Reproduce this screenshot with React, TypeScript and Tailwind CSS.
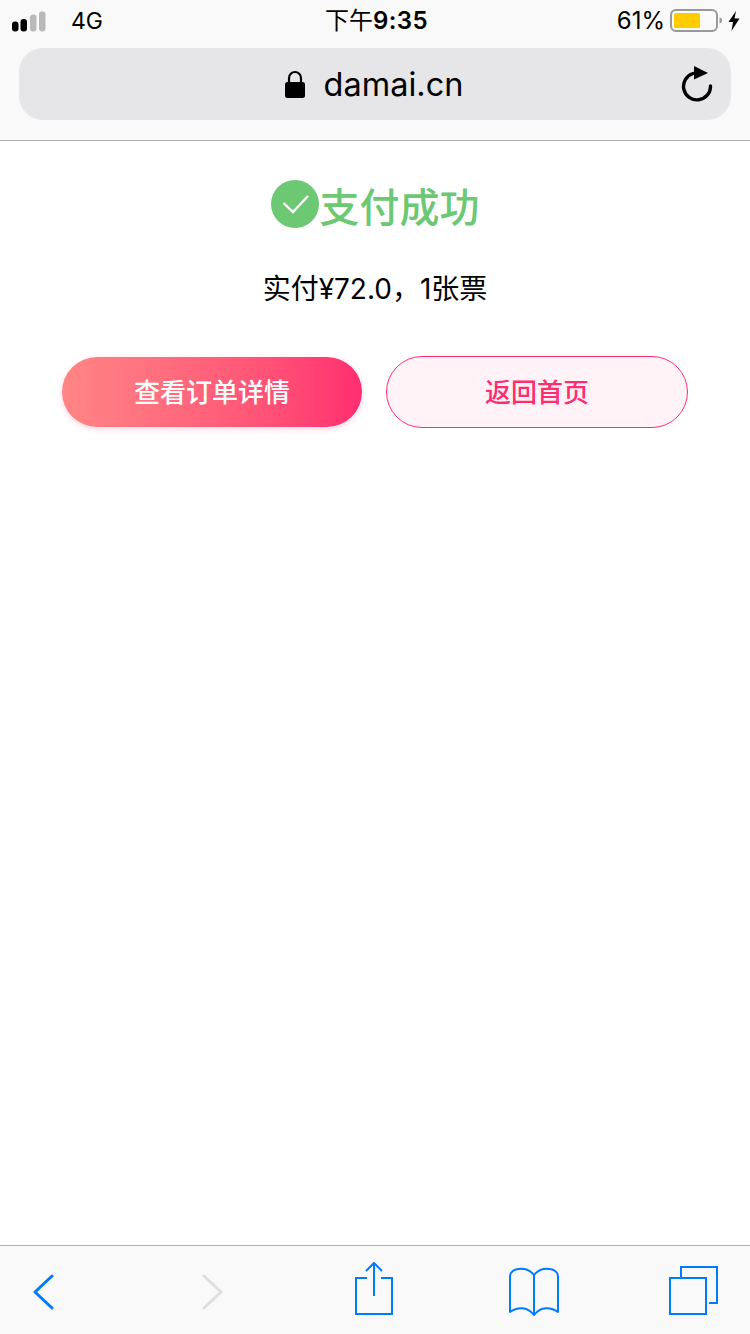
const fontStack = { fontFamily: '"Inter", "Noto Sans CJK SC", sans-serif' };

const SignalIcon = () => (
  <svg width="34" height="21" viewBox="0 0 34 21">
    <rect x="0" y="10.5" width="6.5" height="10" rx="3" fill="#000" />
    <rect x="8.5" y="8" width="6.5" height="12.5" rx="3" fill="#000" />
    <rect x="18" y="3.5" width="6.5" height="17" rx="3" fill="#b9b9b9" />
    <rect x="27" y="0.5" width="6.5" height="20" rx="3" fill="#b9b9b9" />
  </svg>
);

const BatteryIcon = () => (
  <svg width="53" height="24" viewBox="0 0 53 24">
    <rect x="1" y="1" width="46" height="21" rx="5" fill="none" stroke="#999" strokeWidth="2" />
    <rect x="4" y="4" width="26" height="15" rx="1.5" fill="#fc0" />
    <path d="M49.5 8.5 C51.5 9 52 10 52 11.5 C52 13 51.5 14 49.5 14.5Z" fill="#999" />
  </svg>
);

const BoltIcon = () => (
  <svg width="12" height="20" viewBox="0 0 12 20">
    <path d="M8 0 L0.5 11 L5 11 L3.5 20 L11.5 7.5 L6.5 7.5 Z" fill="#000" />
  </svg>
);

const LockIcon = () => (
  <svg width="20" height="28" viewBox="0 0 20 28">
    <path d="M4 13 V8 a6 6 0 0 1 12 0 V13" fill="none" stroke="#000" strokeWidth="2.2" />
    <rect x="0" y="12" width="20" height="16" rx="2.5" fill="#000" />
  </svg>
);

const ReloadIcon = () => (
  <svg width="32" height="36" viewBox="0 0 32 36">
    <path d="M12 7.5 A13.5 13.5 0 1 0 29.5 20" fill="none" stroke="#000" strokeWidth="3.4" strokeLinecap="round" />
    <path d="M13 0 L27 7 L13 13.5 Z" fill="#000" />
  </svg>
);

const CheckCircle = () => (
  <svg width="48" height="48" viewBox="0 0 48 48" className="shrink-0">
    <circle cx="24" cy="24" r="24" fill="#6cc872" />
    <path d="M12.5 23 L22 32 L37 16" fill="none" stroke="#fff" strokeWidth="2.4" />
  </svg>
);

const BackIcon = () => (
  <svg width="22" height="36" viewBox="0 0 22 36">
    <path d="M20 2 L3 18 L20 34" fill="none" stroke="#007aff" strokeWidth="3" strokeLinecap="round" strokeLinejoin="round" />
  </svg>
);

const ForwardIcon = () => (
  <svg width="22" height="36" viewBox="0 0 22 36">
    <path d="M2 2 L19 18 L2 34" fill="none" stroke="#dedede" strokeWidth="3" strokeLinecap="round" strokeLinejoin="round" />
  </svg>
);

const ShareIcon = () => (
  <svg width="38" height="54" viewBox="0 0 38 54">
    <path d="M12 16 H1 V52 H37 V16 H26" fill="none" stroke="#007aff" strokeWidth="2" />
    <path d="M19 1 V34" stroke="#007aff" strokeWidth="2" fill="none" />
    <path d="M11 9 L19 1 L27 9" stroke="#007aff" strokeWidth="2" fill="none" />
  </svg>
);

const BookIcon = () => (
  <svg width="50" height="50" viewBox="0 0 50 50">
    <path
      d="M25 8 C21 3 15 1 9 2 C5 2.5 1 5 1 9 V45 C8 40 18 39 25 48 C32 39 42 40 49 45 V9 C49 5 45 2.5 41 2 C35 1 29 3 25 8 Z M25 8 V48"
      fill="none"
      stroke="#007aff"
      strokeWidth="2"
      strokeLinejoin="round"
    />
  </svg>
);

const TabsIcon = () => (
  <svg width="50" height="49" viewBox="0 0 50 49">
    <path d="M12 11 V1 H48 V37 H40" fill="none" stroke="#007aff" strokeWidth="2" />
    <rect x="1" y="12" width="36" height="36" fill="none" stroke="#007aff" strokeWidth="2" />
  </svg>
);

export default function App() {
  return (
    <div className="flex h-[1334px] w-[750px] flex-col bg-white text-black" style={fontStack}>
      <header className="h-[141px] shrink-0 border-b border-[#b2b2b2] bg-[#f9f9f9]">
        <div className="flex h-[48px] items-center justify-between pl-[12px] pr-[10px] pb-[6px]">
          <div className="flex w-[240px] items-center gap-[25px]">
            <SignalIcon />
            <span className="text-[23px] leading-none">4G</span>
          </div>
          <span className="ml-[1px] text-[24px] leading-none">
            下午<span className="font-semibold tracking-[0.4px]">9:35</span>
          </span>
          <div className="flex w-[240px] items-center justify-end">
            <span className="text-[24px] leading-none">61%</span>
            <div className="ml-[5px] mr-[5px] flex">
              <BatteryIcon />
            </div>
            <BoltIcon />
          </div>
        </div>
        <div className="relative mx-[19px] flex h-[72px] items-center justify-center gap-[19px] rounded-[24px] bg-[#e6e6e8] pr-[2px]">
          <LockIcon />
          <span className="mt-[2px] text-[32.5px] leading-none">damai.cn</span>
          <div className="absolute right-[18px] top-[18px]">
            <ReloadIcon />
          </div>
        </div>
      </header>

      <main className="flex-1">
        <div className="mt-[39px] flex items-start justify-center">
          <CheckCircle />
          <span className="ml-px text-[40px] font-medium leading-[56px] text-[#6cc872]">支付成功</span>
        </div>
        <p className="mt-[33px] text-center text-[28px] leading-[40px]">实付¥72.0，1张票</p>
        <div className="mt-[47px] flex items-center pl-[62px]">
          <button className="h-[70px] w-[300px] rounded-full bg-gradient-to-r from-[#ff8585] to-[#ff2d70] text-[26px] font-medium text-white shadow-[0_2px_6px_rgba(255,45,112,0.2)]">
            查看订单详情
          </button>
          <button className="ml-[24px] h-[72px] w-[302px] rounded-full border border-[#ff2d70] bg-[#fff3f8] text-[26px] font-medium text-[#ff2d70]">
            返回首页
          </button>
        </div>
      </main>

      <footer className="flex h-[89px] shrink-0 items-center border-t border-[#b2b2b2] bg-[#f9f9f9]">
        <div className="ml-[32px] mt-[4px] flex">
          <BackIcon />
        </div>
        <div className="ml-[148px] mt-[4px] flex">
          <ForwardIcon />
        </div>
        <div className="mb-[2px] ml-[131px] flex">
          <ShareIcon />
        </div>
        <div className="ml-[116px] mt-[4px] flex">
          <BookIcon />
        </div>
        <div className="ml-[110px] flex">
          <TabsIcon />
        </div>
      </footer>
    </div>
  );
}
